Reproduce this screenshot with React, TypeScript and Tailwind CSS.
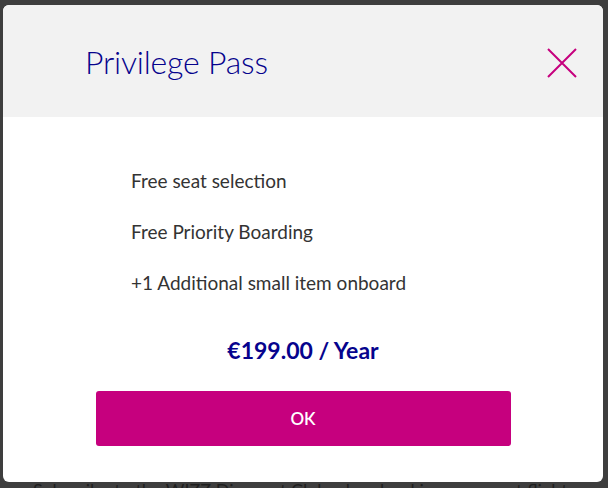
const perks = [
  "Free seat selection",
  "Free Priority Boarding",
  "+1 Additional small item onboard",
];

export default function App() {
  return (
    <div className="relative h-[488px] w-[608px] overflow-hidden bg-[#3e3e3e] font-['Lato','Noto_Sans',sans-serif]">
      {/* page behind the overlay */}
      <div className="pt-[478px] pl-[33px] text-[18px] leading-[24px] text-[#1e1e1e] whitespace-nowrap">
        Subscribe to the WIZZ Discount Club when booking your next flight
      </div>

      {/* modal */}
      <div className="absolute left-[3px] top-[5px] flex h-[477px] w-[600px] flex-col overflow-hidden rounded-[6px] bg-white">
        <div className="flex h-[112px] items-center justify-between bg-[#f2f2f2] pl-[82px] pr-[26px]">
          <h2 className="mt-[2px] text-[32px] font-light tracking-[-0.2px] text-[#06038d]">
            Privilege Pass
          </h2>
          <button className="mt-[4px] text-[#c6007e]">
            <svg width="30" height="30" viewBox="0 0 30 30" fill="none" stroke="currentColor" strokeWidth="2">
              <path d="M1 1L29 29M29 1L1 29" />
            </svg>
          </button>
        </div>

        <div className="flex flex-col">
          <ul className="mt-[52px] flex flex-col gap-[27px] pl-[128px] text-[19px] leading-[24px] text-[#333333]">
            {perks.map((perk) => (
              <li key={perk}>{perk}</li>
            ))}
          </ul>
          <p className="mt-[40px] text-center text-[23px] font-bold leading-[30px] text-[#06038d]">
            €199.00 / Year
          </p>
          <button className="mx-auto mt-[26px] h-[55px] w-[415px] rounded-[3px] bg-[#c6007e] text-[17px] font-semibold text-white">
            OK
          </button>
        </div>
      </div>
    </div>
  );
}
